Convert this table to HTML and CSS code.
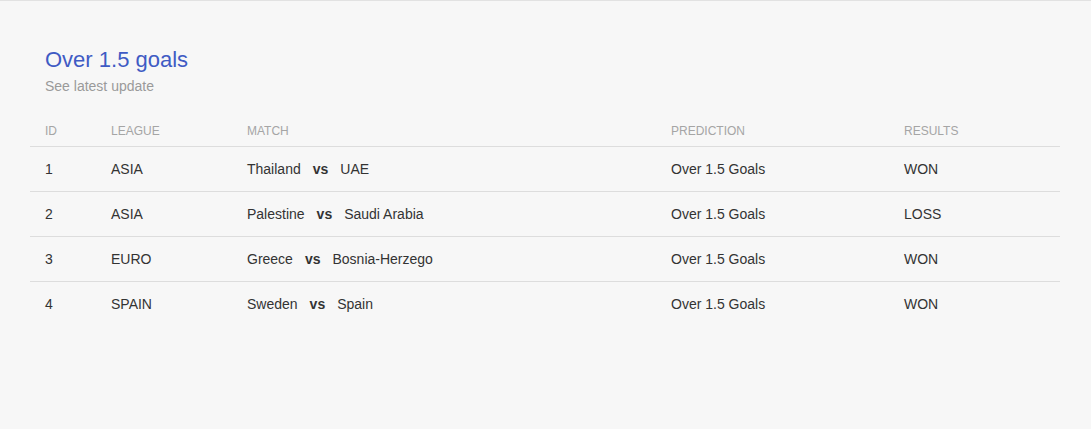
FILE: index.html
```html
<!DOCTYPE html>
<html>
<head>
<meta charset="utf-8">
<link rel="stylesheet" href="styles.css">
</head>
<body>
<div class="page">
  <div class="heading">
    <h1 class="title">Over 1.5 goals</h1>
    <p class="subtitle">See latest update</p>
  </div>
  <table class="table">
    <colgroup>
      <col class="c-id"><col class="c-league"><col class="c-match"><col class="c-pred"><col class="c-res">
    </colgroup>
    <thead>
      <tr><th>ID</th><th>LEAGUE</th><th>MATCH</th><th>PREDICTION</th><th>RESULTS</th></tr>
    </thead>
    <tbody>
      <tr><td>1</td><td>ASIA</td><td>Thailand<span class="vs">vs</span>UAE</td><td>Over 1.5 Goals</td><td>WON</td></tr>
      <tr><td>2</td><td>ASIA</td><td>Palestine<span class="vs">vs</span>Saudi Arabia</td><td>Over 1.5 Goals</td><td>LOSS</td></tr>
      <tr><td>3</td><td>EURO</td><td>Greece<span class="vs">vs</span>Bosnia-Herzego</td><td>Over 1.5 Goals</td><td>WON</td></tr>
      <tr><td>4</td><td>SPAIN</td><td>Sweden<span class="vs">vs</span>Spain</td><td>Over 1.5 Goals</td><td>WON</td></tr>
    </tbody>
  </table>
</div>
</body>
</html>
```
FILE: styles.css
```css
html, body {
  margin: 0;
  padding: 0;
  background: #f7f7f7;
}
body {
  font-family: "Liberation Sans", Arial, sans-serif;
  border-top: 1px solid #e2e2e2;
  min-height: 428px;
}
.page {
  padding: 46px 31px 0 30px;
}
.heading {
  padding: 0 15px;
  margin-bottom: 21px;
}
.title {
  margin: 0;
  font-size: 22px;
  font-weight: normal;
  color: #3f5bc4;
  line-height: 26px;
}
.subtitle {
  margin: 4px 0 0;
  font-size: 14px;
  color: #9a9a9a;
  line-height: 18px;
}
.table {
  width: 100%;
  border-collapse: collapse;
}
.c-id { width: 66px; }
.c-league { width: 136px; }
.c-match { width: 424px; }
.c-pred { width: 233px; }
.c-res { width: auto; }
th {
  text-align: left;
  font-weight: normal;
  font-size: 12px;
  color: #a5a5a5;
  padding: 0 15px;
  height: 30px;
  vertical-align: middle;
  border-bottom: 1px solid #dddddd;
}
td {
  padding: 0 15px;
  height: 44px;
  font-size: 14px;
  color: #333;
  border-bottom: 1px solid #dddddd;
}
tbody tr:last-child td {
  border-bottom: none;
}
.vs {
  font-weight: bold;
  margin: 0 12px;
}
```
